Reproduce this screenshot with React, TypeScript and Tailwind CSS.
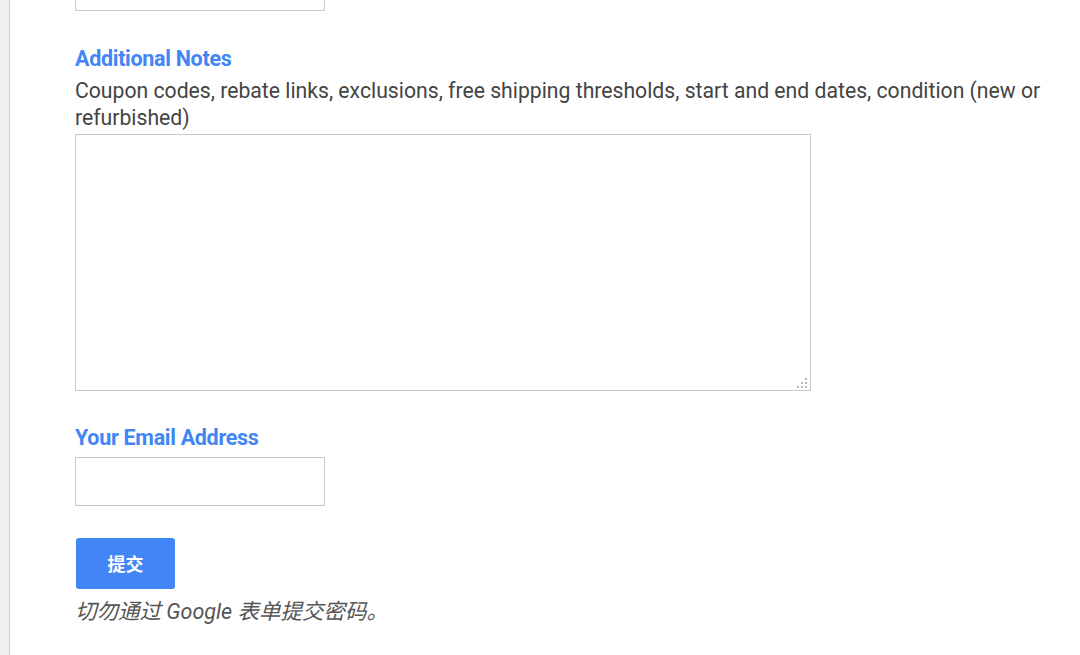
export default function App() {
  return (
    <div className="flex h-[655px] w-[1080px] overflow-hidden bg-white font-['Roboto',sans-serif]">
      <div className="w-[10px] shrink-0 border-r border-[#d4d4d4] bg-[#efefef]" />
      <div className="flex w-[1045px] flex-col pl-[65px]">
        <div className="-mt-[40px] h-[51px] w-[250px] border border-[#c9c9c9] border-t-transparent" />

        <div className="mt-[35px] text-[21.5px] font-bold leading-[26px] tracking-[-0.3px] text-[#4285f4]">
          Additional Notes
        </div>
        <p className="mt-[5px] text-[21.2px] leading-[27px] text-[#444]">
          Coupon codes, rebate links, exclusions, free shipping thresholds, start and end dates, condition (new or refurbished)
        </p>
        <div className="relative mt-[3px] h-[257px] w-[736px]">
          <textarea className="h-full w-full resize-none border border-[#c9c9c9] outline-none" />
          <svg className="absolute bottom-[3px] right-[3px]" width="12" height="12" viewBox="0 0 12 12">
            <g fill="#b8b8b8">
              <rect x="9" y="2" width="2" height="2" />
              <rect x="5" y="6" width="2" height="2" />
              <rect x="9" y="6" width="2" height="2" />
              <rect x="1" y="10" width="2" height="2" />
              <rect x="5" y="10" width="2" height="2" />
              <rect x="9" y="10" width="2" height="2" />
            </g>
          </svg>
        </div>

        <div className="mt-[34px] text-[21.5px] font-bold leading-[26px] tracking-[-0.3px] text-[#4285f4]">
          Your Email Address
        </div>
        <input className="mt-[6px] h-[49px] w-[250px] border border-[#c9c9c9] outline-none" />

        <button className="mt-[32px] ml-px h-[51px] w-[99px] rounded-[3px] bg-[#4285f4] font-['Noto_Sans_CJK_SC',sans-serif] text-[18px] font-bold text-white">
          提交
        </button>
        <p className="mt-[10px] font-['Roboto','Noto_Sans_CJK_SC',sans-serif] text-[21.5px] italic leading-[26px] text-[#555]">
          切勿通过 Google 表单提交密码。
        </p>
      </div>
    </div>
  );
}
